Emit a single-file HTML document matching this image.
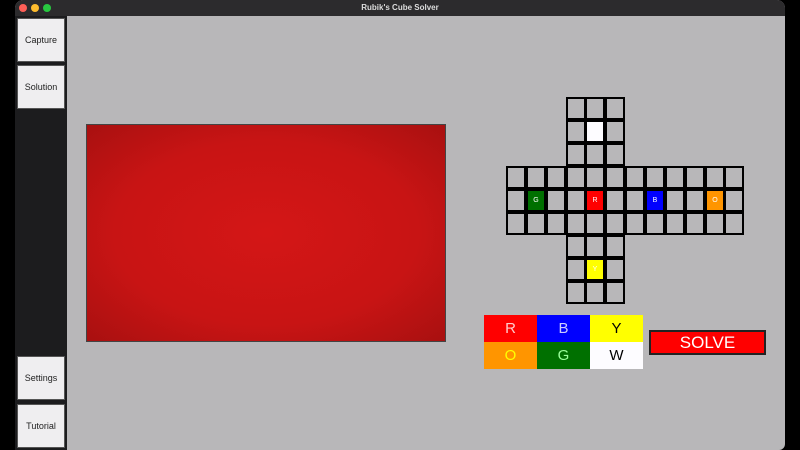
<!DOCTYPE html><html><head><style>
body{margin:0;width:800px;height:450px;background:#000;position:relative;overflow:hidden;font-family:"Liberation Sans",sans-serif}
.a{position:absolute}
.btn{position:absolute;left:17px;width:48px;height:44px;background:#efeef0;border:1px solid #555;box-sizing:border-box;font-size:9px;color:#222;display:flex;align-items:center;justify-content:center}
.c{position:absolute;width:20px;height:23px;box-sizing:border-box;border:2px solid #000;background:#b8b7b9;color:#fff;font-size:7px;display:flex;align-items:center;justify-content:center}
.p{position:absolute;width:53px;height:27px;display:flex;align-items:center;justify-content:center;font-size:15px}
</style></head><body>
<div class="a" style="left:15px;top:0;width:770px;height:450px;background:#b8b7b9;border-radius:8px 8px 6px 0;overflow:hidden">
 <div class="a" style="left:0;top:0;width:770px;height:16px;background:#2c2b2d;color:#ddd;font-size:8px;font-weight:bold;text-align:center;line-height:16px">Rubik's Cube Solver</div>
 <div class="a" style="left:4px;top:4px;width:8px;height:8px;border-radius:50%;background:#fe5f57"></div>
 <div class="a" style="left:16px;top:4px;width:8px;height:8px;border-radius:50%;background:#febc2e"></div>
 <div class="a" style="left:28px;top:4px;width:8px;height:8px;border-radius:50%;background:#28c840"></div>
 <div class="a" style="left:0;top:16px;width:52px;height:434px;background:#1c1c1e"></div>
</div>
<div class="btn" style="top:18px">Capture</div>
<div class="btn" style="top:65px">Solution</div>
<div class="btn" style="top:356px">Settings</div>
<div class="btn" style="top:404px">Tutorial</div>
<div class="a" style="left:86px;top:124px;width:360px;height:218px;box-sizing:border-box;border:1px solid #444;background:radial-gradient(ellipse at center,#d41616 0%,#c81414 60%,#a81010 100%)"></div>
<div id="g"></div>
<div class="p" style="left:484px;top:315px;background:#f00;color:#fcc">R</div>
<div class="p" style="left:537px;top:315px;background:#00f;color:#ccf">B</div>
<div class="p" style="left:590px;top:315px;background:#ff0;color:#000">Y</div>
<div class="p" style="left:484px;top:342px;background:#ff9500;color:#ff0">O</div>
<div class="p" style="left:537px;top:342px;background:#007000;color:#9f9">G</div>
<div class="p" style="left:590px;top:342px;background:#fdfcff;color:#000">W</div>
<div class="a" style="left:649px;top:330px;width:117px;height:25px;box-sizing:border-box;border:2px solid #222;background:#f00;color:#fff;font-size:17px;display:flex;align-items:center;justify-content:center">SOLVE</div>
<script>
var g=document.getElementById('g'),h='';
var xs=[],ys=[97,120,143,166,189,212,235,258,281];
for(var i=0;i<12;i++)xs.push(506+Math.round(i*19.85));
function cell(c,r,bg,t){h+='<div class="c" style="left:'+xs[c]+'px;top:'+ys[r]+'px'+(bg?';background:'+bg:'')+'">'+(t||'')+'</div>';}
for(var r=0;r<9;r++)for(var c=0;c<12;c++){
 var mid=r>=3&&r<6, col=c>=3&&c<6;
 if(!mid&&!col)continue;
 var bg='',t='';
 if(r==1&&c==4)bg='#fdfcff';
 if(r==4&&c==1){bg='#007000';t='G'}
 if(r==4&&c==4){bg='#f00';t='R'}
 if(r==4&&c==7){bg='#00f';t='B'}
 if(r==4&&c==10){bg='#ff9500';t='O'}
 if(r==7&&c==4){bg='#ff0';t='Y'}
 cell(c,r,bg,t);
}
g.innerHTML=h;
</script>
</body></html>
